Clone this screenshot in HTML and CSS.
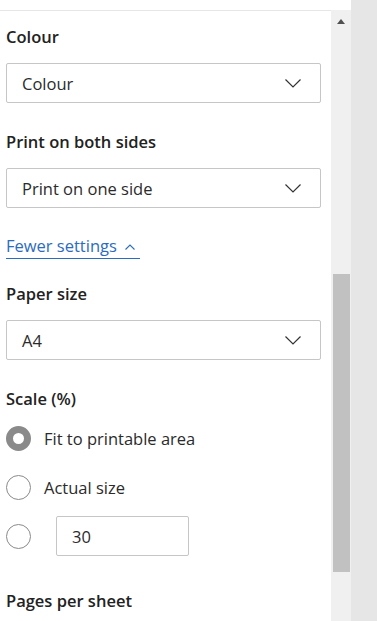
FILE: index.html
```html
<!DOCTYPE html>
<html>
<head>
<meta charset="utf-8">
<link rel="stylesheet" href="styles.css">
</head>
<body>
<div class="frame">
  <div class="panel">
    <div class="topbar"></div>
    <div class="content">
      <div class="label l-first">Colour</div>
      <div class="select"><span>Colour</span><svg class="chev" width="16" height="9" viewBox="0 0 16 9"><path d="M0.5 0.5 L8 8 L15.5 0.5" fill="none" stroke="#333" stroke-width="1.2"/></svg></div>

      <div class="label l-gap">Print on both sides</div>
      <div class="select"><span>Print on one side</span><svg class="chev" width="16" height="9" viewBox="0 0 16 9"><path d="M0.5 0.5 L8 8 L15.5 0.5" fill="none" stroke="#333" stroke-width="1.2"/></svg></div>

      <a class="link">Fewer settings <svg class="caret" width="10" height="6" viewBox="0 0 10 6"><path d="M0.5 5.5 L5 1 L9.5 5.5" fill="none" stroke="#2b6cc0" stroke-width="1.1"/></svg></a>

      <div class="label l-paper">Paper size</div>
      <div class="select"><span>A4</span><svg class="chev" width="16" height="9" viewBox="0 0 16 9"><path d="M0.5 0.5 L8 8 L15.5 0.5" fill="none" stroke="#333" stroke-width="1.2"/></svg></div>

      <div class="label l-gap">Scale (%)</div>
      <div class="radios">
        <div class="radio-row"><span class="radio checked"></span><span class="rtext">Fit to printable area</span></div>
        <div class="radio-row"><span class="radio"></span><span class="rtext">Actual size</span></div>
        <div class="radio-row"><span class="radio"></span><span class="numbox">30</span></div>
      </div>

      <div class="label l-pages">Pages per sheet</div>
    </div>
  </div>
  <div class="scrollbar">
    <div class="arrow"></div>
    <div class="thumb"></div>
  </div>
  <div class="side"></div>
</div>
</body>
</html>
```

FILE: styles.css
```css
html, body {
  margin: 0;
  padding: 0;
  background: #ffffff;
  font-family: "Open Sans", "Noto Sans", sans-serif;
  color: #2b2b2b;
}
.frame {
  display: flex;
  width: 377px;
  height: 621px;
  overflow: hidden;
}
.panel {
  width: 331px;
  flex: none;
  background: #fff;
}
.topbar {
  height: 10px;
  border-bottom: 1px solid #e6e6e6;
}
.content {
  padding-left: 6px;
  padding-right: 10px;
}
.label {
  font-size: 16.5px;
  line-height: 22px;
  font-weight: 600;
  color: #222;
  margin-bottom: 15px;
}
.l-first { margin-top: 15px; }
.l-gap { margin-top: 28px; }
.l-paper { margin-top: 24px; }
.l-pages { margin-top: 42px; }
.select {
  height: 38px;
  border: 1px solid #c6c6c6;
  border-radius: 2px;
  display: flex;
  align-items: center;
  justify-content: space-between;
  padding: 0 19px 0 15px;
  font-size: 16.5px;
  color: #2b2b2b;
}
.chev { display: block; }
.link {
  display: inline-flex;
  align-items: center;
  gap: 8px;
  margin-top: 27px;
  font-size: 16.5px;
  line-height: 22px;
  color: #2b6cc0;
  border-bottom: 1px solid #2b6cc0;
  padding-bottom: 1px;
  padding-right: 5px;
}
.caret { display: block; margin-top: 2px; }
.radios {
  display: flex;
  flex-direction: column;
  gap: 25px;
  margin-top: 16px;
}
.radio-row {
  display: flex;
  align-items: center;
  height: 24px;
  font-size: 16.5px;
  color: #2b2b2b;
}
.radio {
  box-sizing: border-box;
  width: 25px;
  height: 25px;
  border-radius: 50%;
  border: 1px solid #8a8a8a;
  flex: none;
  margin-right: 13px;
}
.radio.checked {
  border: 7px solid #8a8a8a;
}
.numbox {
  box-sizing: border-box;
  margin-left: 12px;
  width: 133px;
  height: 40px;
  border: 1px solid #c6c6c6;
  border-radius: 2px;
  display: flex;
  align-items: center;
  padding-left: 15px;
}
.scrollbar {
  width: 20px;
  flex: none;
  background: #f0f0f0;
  margin-top: 10px;
  display: flex;
  flex-direction: column;
  align-items: center;
}
.arrow {
  margin-top: 9px;
  width: 0;
  height: 0;
  border-left: 4px solid transparent;
  border-right: 4px solid transparent;
  border-bottom: 5px solid #505050;
}
.thumb {
  margin-top: 250px;
  width: 17px;
  height: 298px;
  background: #c1c1c1;
}
.side {
  flex: 1;
  background: #e6e6e6;
}
```
